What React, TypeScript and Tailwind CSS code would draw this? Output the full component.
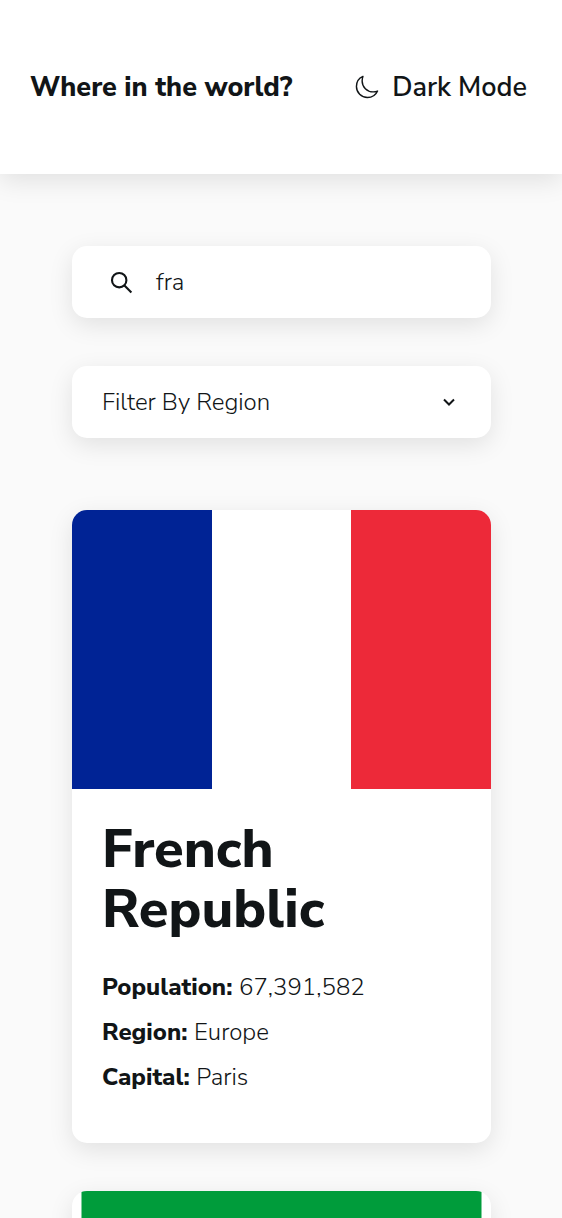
const shadow = "shadow-[0_7px_24px_rgba(0,0,0,0.1)]";

function Header() {
  return (
    <header className={`flex h-[174px] items-center justify-between bg-white pl-[30px] pr-[35px] ${shadow}`}>
      <h1 className="whitespace-nowrap pt-0.5 text-[27px] font-extrabold leading-9">Where in the world?</h1>
      <button className="flex items-center whitespace-nowrap text-[27px] font-semibold leading-9">
        <svg className="mr-3 size-[26px]" viewBox="0 0 512 512" fill="none" stroke="currentColor" strokeWidth="28" strokeLinecap="round" strokeLinejoin="round">
          <path d="M160 136c0-30.62 4.51-61.61 16-88C99.57 81.27 48 159.32 48 248c0 119.29 96.71 216 216 216 88.68 0 166.73-51.57 200-128-26.39 11.49-57.38 16-88 16-119.29 0-216-96.71-216-216z" />
        </svg>
        <span className="pt-0.5">Dark Mode</span>
      </button>
    </header>
  );
}

function Detail({ label, value }: { label: string; value: string }) {
  return (
    <p className="whitespace-nowrap text-2xl font-light leading-[33px]">
      <b className="font-extrabold">{label}:</b> <span className="ml-[0.6px]">{value}</span>
    </p>
  );
}

export default function App() {
  return (
    <div className="h-[1218px] overflow-hidden bg-[#fafafa] font-['Nunito_Sans','Nunito','Lato',sans-serif] text-[#111517]">
      <Header />
      <main className="ml-[72px] mt-[72px] w-[419px]">
        <label className={`flex h-[72px] items-center rounded-[15px] bg-white pl-9 ${shadow}`}>
          <svg className="mr-[22px] size-[26px]" viewBox="0 0 26 26" fill="none" stroke="currentColor" strokeWidth="2.1">
            <circle cx="11.2" cy="11.2" r="7.2" />
            <path d="m16.2 16.2 7.2 7.2" />
          </svg>
          <span className="text-2xl font-light">fra</span>
        </label>
        <button className={`mt-12 flex h-[72px] w-full items-center justify-between rounded-[15px] bg-white pl-[30px] pr-9 text-2xl font-light ${shadow}`}>
          <span>Filter By Region</span>
          <svg className="h-3 w-3" viewBox="0 0 12 12" fill="none" stroke="currentColor" strokeWidth="2">
            <path d="M1 3.5 6 8.5 11 3.5" />
          </svg>
        </button>
        <article className={`mt-[72px] h-[633px] overflow-hidden rounded-[15px] bg-white ${shadow}`}>
          <div className="grid h-[279px] grid-cols-3">
            <div className="bg-[#002395]" />
            <div className="bg-white" />
            <div className="bg-[#ed2939]" />
          </div>
          <div className="px-[30px] pt-[30px]">
            <h2 className="text-[54px] font-extrabold leading-[60px]">
              French
              <br />
              Republic
            </h2>
            <div className="mt-8 grid gap-3">
              <Detail label="Population" value="67,391,582" />
              <Detail label="Region" value="Europe" />
              <Detail label="Capital" value="Paris" />
            </div>
          </div>
        </article>
        <article className={`mt-12 h-[633px] overflow-hidden rounded-[15px] bg-white ${shadow}`}>
          <svg className="ml-[9px] block h-[279px] w-[401px]" viewBox="0 0 401 279">
            <rect x="0.5" width="400" height="279" fill="#009c3b" />
          </svg>
        </article>
      </main>
    </div>
  );
}
